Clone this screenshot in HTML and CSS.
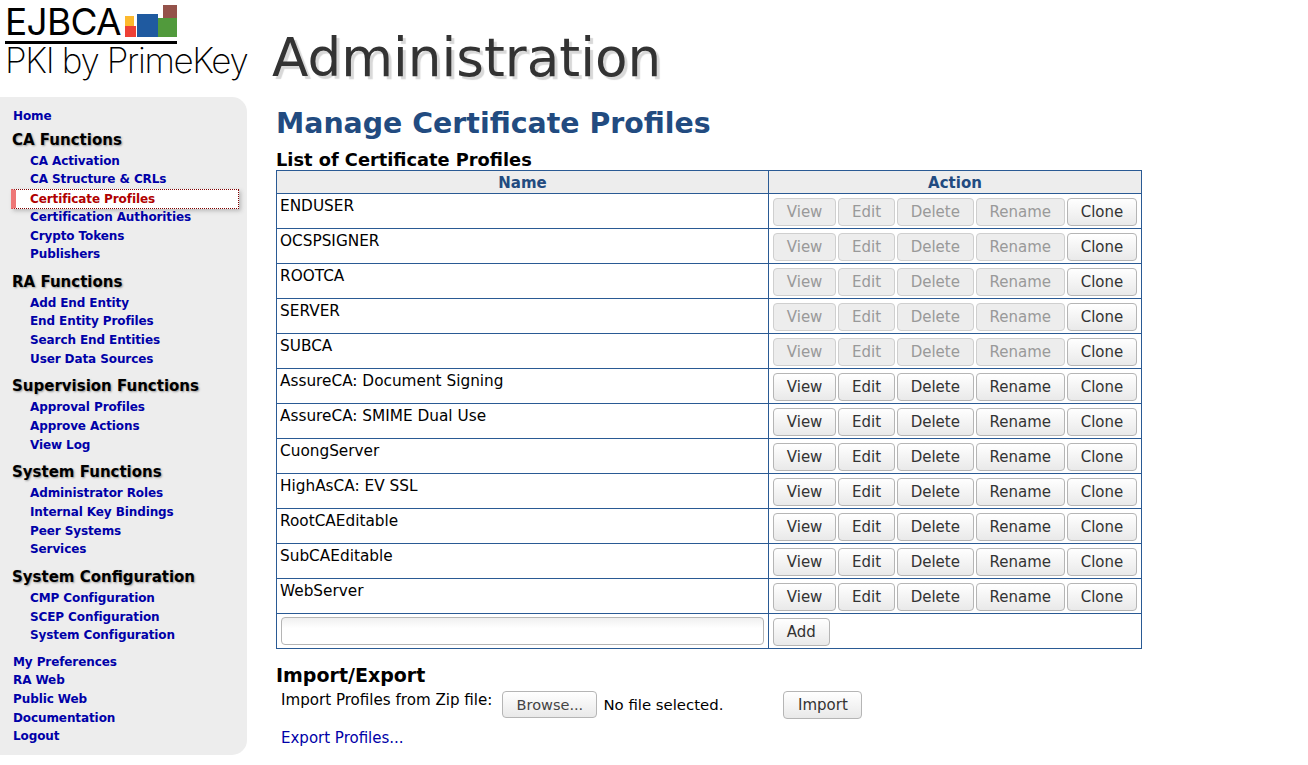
FILE: index.html
```html
<!DOCTYPE html>
<html lang="en">
<head>
    <meta charset="utf-8">
    <title>EJBCA Administration</title>
    <link rel="stylesheet" href="styles.css">
</head>
<body>

<div id="header">
    <div class="logo">
        <div class="logo-top">
            <span class="logo-name">EJBCA</span>
            <svg class="logo-blocks" width="52" height="32" viewBox="0 0 52 32">
                <rect x="0" y="11" width="9" height="10" fill="#fdb92e"/>
                <rect x="0" y="21" width="11" height="11" fill="#ee4036"/>
                <rect x="12" y="9" width="21" height="23" fill="#1f5aa0"/>
                <rect x="33" y="13" width="19" height="19" fill="#519a3c"/>
                <rect x="38" y="0" width="14" height="13" fill="#94524a"/>
            </svg>
        </div>
        <div class="logo-sub">PKI by PrimeKey</div>
    </div>
    <div class="site-title">Administration</div>
</div>

<div id="page">
    <div id="nav">
        <a class="nav-top" href="#">Home</a>
        <h3>CA Functions</h3>
        <a href="#">CA Activation</a>
        <a href="#">CA Structure &amp; CRLs</a>
        <a class="current" href="#">Certificate Profiles</a>
        <a href="#">Certification Authorities</a>
        <a href="#">Crypto Tokens</a>
        <a href="#">Publishers</a>
        <h3>RA Functions</h3>
        <a href="#">Add End Entity</a>
        <a href="#">End Entity Profiles</a>
        <a href="#">Search End Entities</a>
        <a href="#">User Data Sources</a>
        <h3>Supervision Functions</h3>
        <a href="#">Approval Profiles</a>
        <a href="#">Approve Actions</a>
        <a href="#">View Log</a>
        <h3>System Functions</h3>
        <a href="#">Administrator Roles</a>
        <a href="#">Internal Key Bindings</a>
        <a href="#">Peer Systems</a>
        <a href="#">Services</a>
        <h3>System Configuration</h3>
        <a href="#">CMP Configuration</a>
        <a href="#">SCEP Configuration</a>
        <a href="#">System Configuration</a>
        <div class="nav-gap"></div>
        <a class="nav-top" href="#">My Preferences</a>
        <a class="nav-top" href="#">RA Web</a>
        <a class="nav-top" href="#">Public Web</a>
        <a class="nav-top" href="#">Documentation</a>
        <a class="nav-top" href="#">Logout</a>
    </div>

    <div id="main">
        <h1>Manage Certificate Profiles</h1>
        <h2>List of Certificate Profiles</h2>
        <table class="list">
            <thead>
                <tr><th class="col-name">Name</th><th>Action</th></tr>
            </thead>
            <tbody>
                <tr><td>ENDUSER</td><td class="actions"><button disabled>View</button><button disabled>Edit</button><button disabled>Delete</button><button disabled>Rename</button><button>Clone</button></td></tr>
                <tr><td>OCSPSIGNER</td><td class="actions"><button disabled>View</button><button disabled>Edit</button><button disabled>Delete</button><button disabled>Rename</button><button>Clone</button></td></tr>
                <tr><td>ROOTCA</td><td class="actions"><button disabled>View</button><button disabled>Edit</button><button disabled>Delete</button><button disabled>Rename</button><button>Clone</button></td></tr>
                <tr><td>SERVER</td><td class="actions"><button disabled>View</button><button disabled>Edit</button><button disabled>Delete</button><button disabled>Rename</button><button>Clone</button></td></tr>
                <tr><td>SUBCA</td><td class="actions"><button disabled>View</button><button disabled>Edit</button><button disabled>Delete</button><button disabled>Rename</button><button>Clone</button></td></tr>
                <tr><td>AssureCA: Document Signing</td><td class="actions"><button>View</button><button>Edit</button><button>Delete</button><button>Rename</button><button>Clone</button></td></tr>
                <tr><td>AssureCA: SMIME Dual Use</td><td class="actions"><button>View</button><button>Edit</button><button>Delete</button><button>Rename</button><button>Clone</button></td></tr>
                <tr><td>CuongServer</td><td class="actions"><button>View</button><button>Edit</button><button>Delete</button><button>Rename</button><button>Clone</button></td></tr>
                <tr><td>HighAsCA: EV SSL</td><td class="actions"><button>View</button><button>Edit</button><button>Delete</button><button>Rename</button><button>Clone</button></td></tr>
                <tr><td>RootCAEditable</td><td class="actions"><button>View</button><button>Edit</button><button>Delete</button><button>Rename</button><button>Clone</button></td></tr>
                <tr><td>SubCAEditable</td><td class="actions"><button>View</button><button>Edit</button><button>Delete</button><button>Rename</button><button>Clone</button></td></tr>
                <tr><td>WebServer</td><td class="actions"><button>View</button><button>Edit</button><button>Delete</button><button>Rename</button><button>Clone</button></td></tr>
                <tr><td class="add-name"><input class="name-input" type="text"></td><td class="actions"><button>Add</button></td></tr>
            </tbody>
        </table>

        <h2 class="import-title">Import/Export</h2>
        <div class="import-row">
            <span class="import-label">Import Profiles from Zip file:</span>
            <button class="browse">Browse...</button>
            <span class="no-file">No file selected.</span>
            <button class="import">Import</button>
        </div>
        <a class="export" href="#">Export Profiles...</a>
    </div>
</div>

</body>
</html>
```

FILE: styles.css
```css
html, body {
    margin: 0;
    padding: 0;
}

body {
    font-family: "DejaVu Sans", Verdana, sans-serif;
    font-size: 14px;
    color: #000;
    background: #fff;
}

/* header */
#header {
    display: flex;
    height: 97px;
}

.logo {
    width: 272px;
    padding: 5px 0 0 5px;
    box-sizing: border-box;
    font-family: Inter, "Liberation Sans", sans-serif;
    color: #000;
}

.logo-top {
    display: flex;
    align-items: flex-start;
    justify-content: space-between;
    width: 172px;
    height: 36px;
    border-bottom: 3px solid #000;
}

.logo-name {
    font-size: 37px;
    font-weight: 400;
    line-height: 36px;
    letter-spacing: -0.7px;
    margin-top: -1px;
}

.logo-sub {
    font-size: 35px;
    font-weight: 200;
    line-height: 40px;
    letter-spacing: -1.35px;
    margin-top: -4px;
    white-space: nowrap;
}

.logo-blocks {
    display: block;
}

.site-title {
    font-size: 53.2px;
    line-height: 60px;
    margin-top: 28px;
    color: #333;
    text-shadow: 3px 3px 1px #d8d8d8;
}

/* sidebar */
#page {
    display: flex;
    align-items: flex-start;
}

#nav {
    width: 247px;
    height: 658px;
    box-sizing: border-box;
    padding-top: 10px;
    background: #ededed;
    border-radius: 0 15px 15px 0;
    flex-shrink: 0;
}

#nav a {
    display: block;
    height: 18.65px;
    line-height: 18.65px;
    padding-left: 30px;
    font-size: 12px;
    letter-spacing: -0.1px;
    font-weight: bold;
    color: #0000a8;
    text-decoration: none;
}

#nav a.nav-top {
    padding-left: 13px;
}

#nav a.current {
    width: 208px;
    padding-left: 14px;
    margin-left: 11px;
    margin-bottom: -1px;
    border: 1px dotted #800000;
    border-left: 5px solid #ee7777;
    height: 18px;
    line-height: 18px;
    background: #fff;
    color: #b00000;
    box-shadow: 2px 2px 4px #bbb;
}

#nav h3 {
    margin: 7px 0 0 12px;
    font-size: 15px;
    line-height: 23px;
    font-weight: bold;
    color: #000;
    text-shadow: 1px 1px 2px #999;
}

#nav a.nav-top + h3 {
    margin-top: 3px;
}

.nav-gap {
    height: 8px;
}

/* main column */
#main {
    margin-left: 29px;
    flex: 1;
}

h1 {
    margin: 8px 0 0;
    font-size: 28.4px;
    line-height: 38px;
    font-weight: bold;
    color: #224b80;
}

h2 {
    margin: 7px 0 0;
    font-size: 17.8px;
    line-height: 20px;
    font-weight: bold;
}

.list {
    width: 866px;
    border-collapse: collapse;
    table-layout: fixed;
}

.list th, .list td {
    border: 1px solid #2a5a94;
    padding: 0;
}

.list th {
    height: 23px;
    padding-top: 2px;
    box-sizing: border-box;
    background: #ededed;
    color: #224b80;
    font-size: 15px;
    font-weight: bold;
}

.list .col-name {
    width: 492px;
}

.list td {
    height: 35px;
    padding: 3px 3px 0;
    box-sizing: border-box;
    vertical-align: top;
    font-size: 15.3px;
    line-height: 18px;
}

.list td.actions {
    padding: 4px 0 0 4px;
    white-space: nowrap;
}

button {
    height: 28px;
    padding: 0 12.8px;
    margin-right: 2px;
    border: 1px solid #b5b5b5;
    border-radius: 4px;
    background: linear-gradient(#fff, #e9e9e9);
    color: #333;
    font-family: "DejaVu Sans", Verdana, sans-serif;
    font-size: 15px;
    vertical-align: top;
}

button:disabled {
    background: #ededed;
    border-color: #cfcfcf;
    color: #999;
}

.list td.add-name {
    padding: 3px 4px;
}

.name-input {
    display: block;
    width: 100%;
    height: 28px;
    box-sizing: border-box;
    border: 1px solid #b5b5b5;
    border-radius: 4px;
    background: linear-gradient(#f0f0f0, #fff 40%);
}

.import-title {
    margin-top: 16px;
    font-size: 19px;
}

.import-row {
    display: flex;
    align-items: flex-start;
    padding: 5px 0 0 5px;
    height: 38px;
}

.import-label {
    font-size: 15.1px;
    line-height: 20px;
    margin: 0 10px 0 0;
}

.browse {
    width: 95px;
    padding: 0;
    height: 27px;
    font-size: 14.5px;
    color: #444;
    margin: 1px 0 0;
}

.no-file {
    font-size: 14.9px;
    margin: 6px 0 0 6px;
    line-height: 18px;
    width: 180px;
}

.import {
    width: 79px;
    padding: 0;
    margin-top: 1px;
}

.export {
    display: block;
    padding-left: 5px;
    font-size: 15px;
    color: #0000a8;
    text-decoration: none;
    line-height: 20px;
}
```
